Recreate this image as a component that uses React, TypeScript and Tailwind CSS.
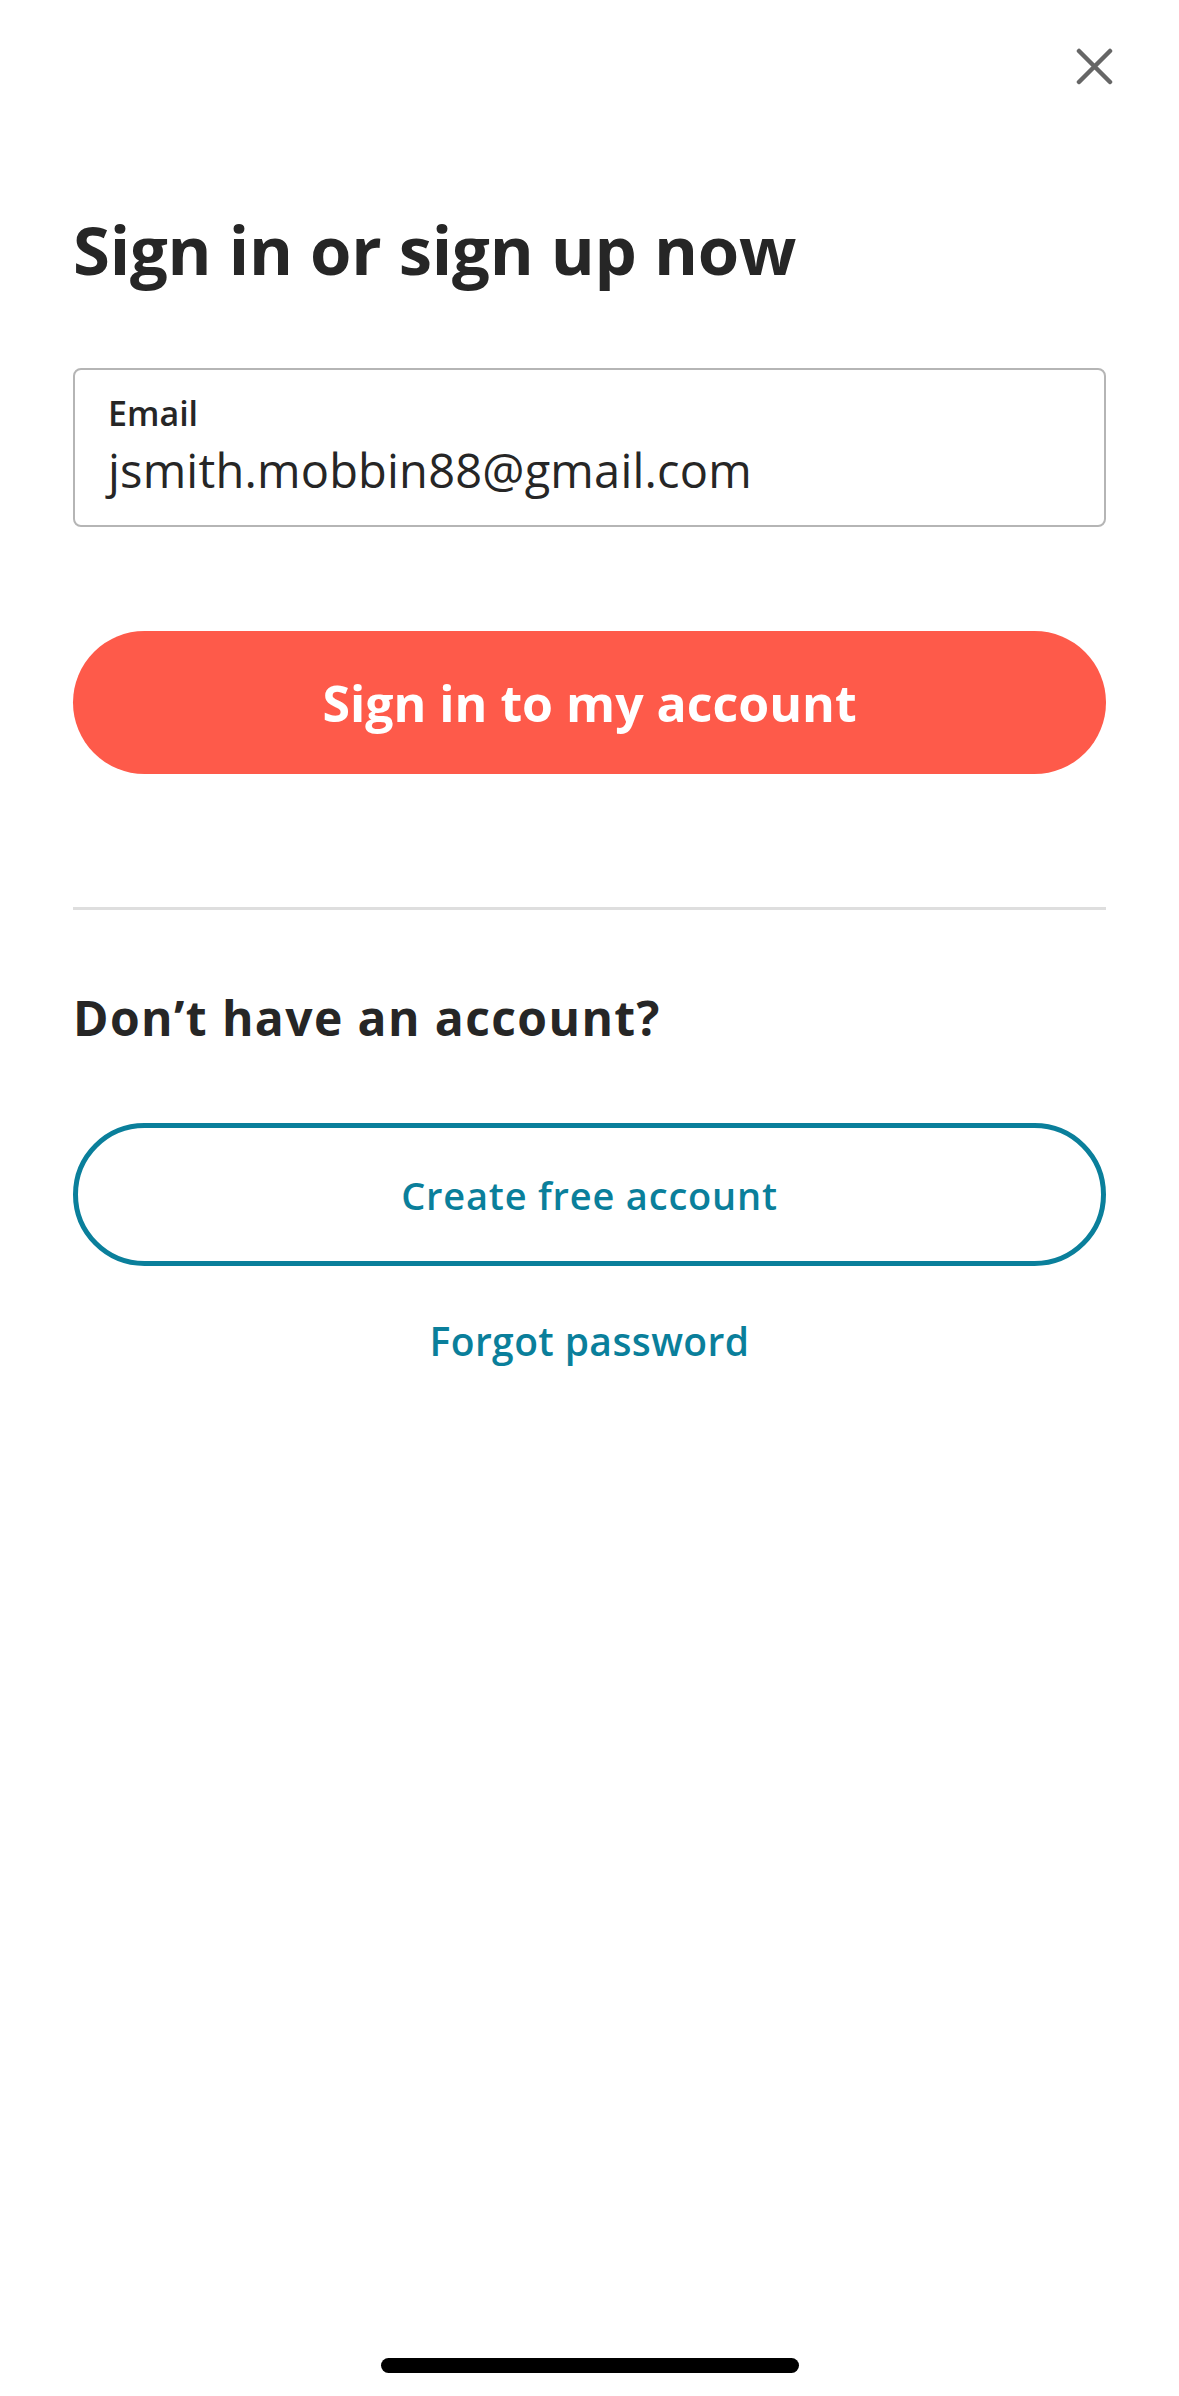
export default function App() {
  return (
    <div className="min-h-[2396px] w-full bg-white flex flex-col font-['Open_Sans',sans-serif] text-[#262626]">
      {/* top bar with close button */}
      <div className="flex justify-end pt-[48px] pr-[66px]">
        <button aria-label="Close" className="w-[37px] h-[37px] flex items-center justify-center">
          <svg width="37" height="37" viewBox="0 0 37 37" fill="none">
            <path d="M3 3L34 34M34 3L3 34" stroke="#666666" strokeWidth="4.5" strokeLinecap="round" />
          </svg>
        </button>
      </div>

      <div className="px-[73px] flex flex-col">
        <h1 className="mt-[131px] text-[67px] leading-none font-bold tracking-[-0.2px]">
          Sign in or sign up now
        </h1>

        {/* email field */}
        <div className="mt-[85px] h-[159px] rounded-[8px] border-2 border-[#b5b5b5] pl-[33px] pt-[26px]">
          <div className="text-[34px] leading-none font-semibold">Email</div>
          <div className="mt-[17px] text-[47px] leading-none tracking-[0.2px]">jsmith.mobbin88@gmail.com</div>
        </div>

        <button className="mt-[104px] h-[143px] rounded-full bg-[#fe5a4a] text-white text-[50px] font-bold leading-none">
          Sign in to my account
        </button>

        <div className="mt-[133px] h-[3px] bg-[#dedede]" />

        <h2 className="mt-[84px] text-[48px] leading-none font-bold tracking-[1.4px]">Don’t have an account?</h2>

        <button className="mt-[81px] h-[143px] rounded-full border-[5px] border-[#0a7f9b] text-[#0a7f9b] text-[38px] font-semibold leading-none tracking-[0.8px]">
          Create free account
        </button>

        <a className="mt-[55px] self-center text-[39px] font-semibold leading-none tracking-[0.4px] text-[#0a7f9b]">
          Forgot password
        </a>
      </div>

      {/* home indicator */}
      <div className="mt-auto pb-[23px] flex justify-center">
        <div className="w-[418px] h-[15px] rounded-full bg-black" />
      </div>
    </div>
  )
}
